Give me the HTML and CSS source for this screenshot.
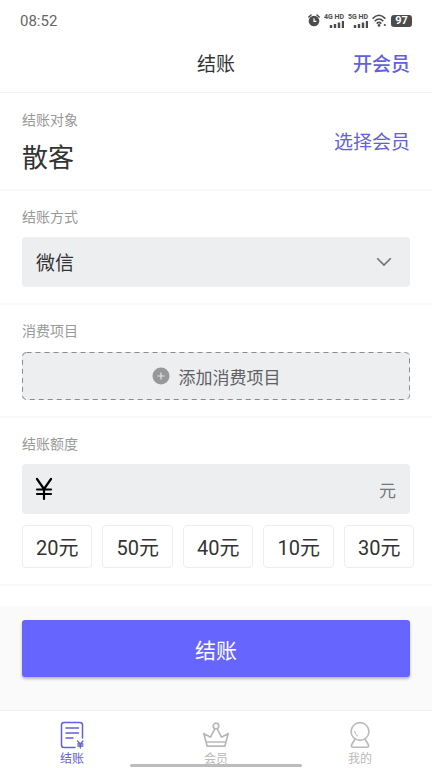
FILE: index.html
```html
<!DOCTYPE html>
<html lang="zh-CN">
<head>
<meta charset="utf-8">
<meta name="viewport" content="width=device-width, initial-scale=1">
<title>结账</title>
<link rel="stylesheet" href="styles.css">
</head>
<body>
<div class="app">
  <div class="status">
    <span class="clock">08:52</span>
    <div class="status-icons">
      <svg width="12" height="13" viewBox="0 0 12 13" aria-hidden="true">
        <path d="M.8 3 3 1M11.2 3 9 1" stroke="#4c4c4c" stroke-width="1.5" stroke-linecap="round"/>
        <circle cx="6" cy="7" r="5.3" fill="#4c4c4c"/>
        <path d="M6 4.2V7.3H8.4" fill="none" stroke="#fff" stroke-width="1.2"/>
      </svg>
      <div class="signal">
        <span>4G HD</span>
        <svg width="15" height="7" viewBox="0 0 15 7" aria-hidden="true"><path d="M2 7V4M6 7V3M10 7V1.500M14 7V0" stroke="#4c4c4c" stroke-width="2.400"/></svg>
      </div>
      <div class="signal">
        <span>5G HD</span>
        <svg width="15" height="7" viewBox="0 0 15 7" aria-hidden="true"><path d="M2 7V4M6 7V3M10 7V1.500M14 7V0" stroke="#4c4c4c" stroke-width="2.400"/></svg>
      </div>
      <svg width="15" height="13" viewBox="0 0 15 13" aria-hidden="true">
        <path d="M.6 4.600Q7 -2.200 13.400 4.600M2.700 7.200Q7 2.800 11.300 7.200M4.700 9.600Q7 7.300 9.300 9.600" fill="none" stroke="#4c4c4c" stroke-width="1.600"/>
        <circle cx="7" cy="11.400" r="1.300" fill="#4c4c4c"/><circle cx="12.800" cy="11" r="1.100" fill="#4c4c4c"/>
      </svg>
      <span class="battery">97</span>
    </div>
  </div>

  <header class="header">
    <h1>结账</h1>
    <a class="link link-strong" href="#join">开会员</a>
  </header>

  <main>
    <section class="section customer">
      <div>
        <h2 class="label">结账对象</h2>
        <p class="customer-name">散客</p>
      </div>
      <a class="link" href="#choose">选择会员</a>
    </section>

    <section class="section">
      <label class="label" for="method">结账方式</label>
      <div class="field">
        <select id="method"><option>微信</option></select>
        <svg class="chevron" width="16" height="10" viewBox="0 0 16 10" aria-hidden="true"><path d="M1.200 1.200 8 8 14.800 1.200" fill="none" stroke="#707174" stroke-width="1.600"/></svg>
      </div>
    </section>

    <section class="section items">
      <h2 class="label">消费项目</h2>
      <button class="add" type="button">
        <svg class="dash" aria-hidden="true"><rect x="0.5" y="0.5" rx="4"/></svg>
        <svg width="18" height="18" viewBox="0 0 18 18" aria-hidden="true"><circle cx="9" cy="9" r="8.500" fill="#97989a"/><path d="M9 5.500V12.500M5.500 9H12.500" stroke="#e4e5e7" stroke-width="1.200"/></svg>
        <span>添加消费项目</span>
      </button>
    </section>

    <section class="section amount">
      <label class="label" for="amount">结账额度</label>
      <div class="field">
        <svg class="yen" width="18" height="24" viewBox="0 0 18 24" role="img" aria-label="人民币"><path d="M2 2 9 12 16 2M9 12V22M2 12.500H16M2 17H16" fill="none" stroke="#000" stroke-width="2.200" stroke-linecap="round" stroke-linejoin="round"/></svg>
        <input id="amount" type="text" inputmode="decimal">
        <span class="unit">元</span>
      </div>
      <div class="chips">
        <button type="button">20元</button>
        <button type="button">50元</button>
        <button type="button">40元</button>
        <button type="button">10元</button>
        <button type="button">30元</button>
      </div>
    </section>
  </main>

  <div class="action">
    <button class="submit" type="button">结账</button>
  </div>

  <nav class="tabs">
    <a class="tab active" href="#checkout">
      <svg width="28" height="28" viewBox="0 0 28 28" fill="none" stroke="currentColor" stroke-width="1.500" stroke-linecap="round" aria-hidden="true">
        <path d="M24.500 17V4Q24.500 1.500 22 1.500H6Q3.500 1.500 3.500 4V24Q3.500 26.500 6 26.500H17"/>
        <path d="M8 7H20.500M8 12H20.500M8 17H15"/>
        <path d="M19.500 20 22.300 23 25 20M22.300 23V27M19.800 23H25M19.800 25H25" stroke-width="1.300"/>
      </svg>
      <span>结账</span>
    </a>
    <a class="tab" href="#members">
      <svg width="28" height="28" viewBox="0 0 28 28" fill="none" stroke="currentColor" stroke-width="1.700" stroke-linejoin="round" aria-hidden="true">
        <circle cx="14" cy="5" r="2.800"/>
        <path d="M12.800 7.800 8.500 16.200 1.800 12.500 5.200 25.200H22.800L26.200 12.500 19.500 16.200 15.200 7.800M4.500 21H23.500"/>
      </svg>
      <span>会员</span>
    </a>
    <a class="tab" href="#mine">
      <svg width="28" height="28" viewBox="0 0 28 28" fill="none" stroke="currentColor" stroke-width="1.600" stroke-linejoin="round" aria-hidden="true">
        <circle cx="14" cy="10.500" r="8.900"/>
        <path d="M9 18 5.500 24Q5 26.200 7 26.200H21Q23 26.200 22.500 24L19 18"/>
        <path d="M8.700 10Q9 14 12 15.200" stroke-width="1"/>
      </svg>
      <span>我的</span>
    </a>
  </nav>
  <div class="home-bar"></div>
</div>
</body>
</html>
```
FILE: styles.css
```css
* {
  box-sizing: border-box;
}

body {
  margin: 0;
  background: #fff;
  color: #333;
  font-family: Roboto, "Noto Sans CJK SC", sans-serif;
}

h1,
h2,
p {
  margin: 0;
  font-weight: 400;
}

a {
  text-decoration: none;
}

button,
input,
select {
  margin: 0;
  border: 0;
  font: inherit;
  color: inherit;
}

.app {
  position: relative;
  display: flex;
  flex-direction: column;
  min-height: 100vh;
}

.status {
  display: flex;
  align-items: center;
  justify-content: space-between;
  height: 41px;
  padding: 0 20px;
}

.clock {
  font-size: 15px;
  color: #666;
}

.status-icons {
  display: flex;
  align-items: center;
  gap: 4px;
}

.signal {
  display: flex;
  flex-direction: column;
  align-items: flex-end;
  color: #4c4c4c;
  font-size: 7px;
  font-weight: 700;
  line-height: 7px;
}

.battery {
  width: 21px;
  border-radius: 3px;
  background: #4c4c4c;
  color: #fff;
  font-size: 11px;
  font-weight: 700;
  line-height: 12px;
  text-align: center;
}

.header {
  display: grid;
  grid-template-columns: 1fr auto 1fr;
  align-items: center;
  height: 52px;
  padding: 0 22px 3px;
  border-bottom: 1px solid #f3f3f3;
}

.header h1 {
  grid-column: 2;
  font-size: 19px;
  line-height: 28px;
}

.link {
  color: #6460d8;
  font-size: 19px;
  line-height: 28px;
  justify-self: end;
}

.link-strong {
  font-weight: 500;
}

.section {
  padding: 16px 22px;
  border-bottom: 2px solid #f9f9f9;
}

.label {
  display: block;
  margin-bottom: 10px;
  color: #999;
  font-size: 14px;
  line-height: 20px;
}

.customer {
  display: flex;
  align-items: center;
  justify-content: space-between;
  padding-top: 17px;
  padding-bottom: 13px;
}

.customer-name {
  font-size: 26px;
  line-height: 36px;
}

.items .label {
  margin-bottom: 11px;
}

.field {
  position: relative;
  display: flex;
  align-items: center;
  height: 50px;
  border-radius: 4px;
  background: #edeef0;
}

.field select {
  width: 100%;
  height: 100%;
  padding: 2px 40px 0 14px;
  appearance: none;
  background: transparent;
  font-size: 19px;
}

.chevron {
  position: absolute;
  right: 18px;
  pointer-events: none;
}

.add {
  position: relative;
  display: flex;
  align-items: center;
  justify-content: center;
  gap: 9px;
  width: 100%;
  height: 48px;
  border-radius: 4px;
  background: #edeef0;
  color: #606163;
  font-size: 17px;
}

.dash {
  position: absolute;
  inset: 0;
  width: 100%;
  height: 100%;
}

.dash rect {
  width: calc(100% - 1px);
  height: calc(100% - 1px);
  fill: none;
  stroke: #8a8b8d;
  stroke-width: 1px;
  stroke-dasharray: 5px 4px;
}

.yen {
  margin-left: 13px;
}

.field input {
  flex: 1;
  min-width: 0;
  height: 100%;
  padding: 0 10px;
  background: transparent;
  font-size: 19px;
  outline: none;
}

.unit {
  margin-right: 14px;
  color: #777;
  font-size: 17px;
}

.chips {
  display: flex;
  gap: 10px;
  margin: 11px -22px 0 0;
}

.chips button {
  flex: none;
  height: 43px;
  padding: 0 13px;
  border: 1px solid #ededed;
  border-radius: 4px;
  background: #fff;
  font-size: 20px;
}

.action {
  flex: 1;
  margin-top: 20px;
  padding: 14px 22px 32px;
  background: #fafafa;
}

.submit {
  width: 100%;
  height: 57px;
  border-radius: 3px;
  background: #66f;
  box-shadow: 0 2px 3px #0004;
  color: #fff;
  font-size: 21px;
}

.tabs {
  display: grid;
  grid-template-columns: repeat(3, 1fr);
  height: 58px;
  padding-top: 10px;
  border-top: 1px solid #f0f0f0;
}

.tab {
  display: flex;
  flex-direction: column;
  align-items: center;
  color: #b9b9b9;
  font-size: 12px;
  line-height: 20px;
}

.tab.active {
  color: #6460d8;
}

.home-bar {
  position: absolute;
  bottom: 1px;
  left: 30%;
  right: 30%;
  height: 3px;
  border-radius: 2px;
  background: #bcbcbc;
}
```
